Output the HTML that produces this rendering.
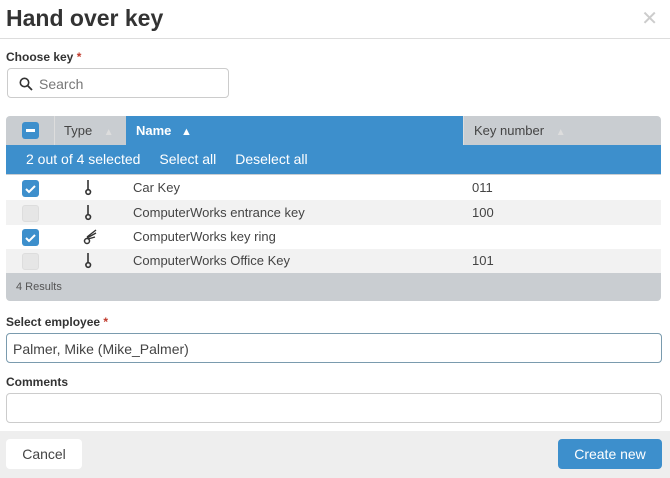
<!DOCTYPE html>
<html><head><meta charset="utf-8"><style>
*{box-sizing:border-box;margin:0;padding:0}
body{width:670px;height:478px;background:#fff;font-family:"Liberation Sans",Arial,sans-serif;color:#333;position:relative;overflow:hidden}
.abs{position:absolute}
.title{left:6px;top:5px;font-size:23px;font-weight:bold;color:#333}
.close{right:12px;top:6px;font-size:20px;color:#ccc}
.sep{left:0;top:38px;width:670px;height:1px;background:#ddd}
.lbl{font-size:12px;font-weight:bold;color:#333;left:6px}
.req{color:#c0392b}
.search{left:7px;top:68px;width:222px;height:30px;border:1px solid #ccc;border-radius:4px}
.search span{position:absolute;left:31px;top:7px;font-size:14px;color:#777}
.tbl{left:6px;top:116px;width:655px;height:185px;border-radius:4px;overflow:hidden;background:#c9cdd1}
.hdr{position:absolute;top:0;height:29px;font-size:13px;line-height:29px}
.bar{position:absolute;top:29px;left:0;width:655px;height:29px;background:#3d8fcc;color:#fff;font-size:14px;line-height:29px}
.row{position:absolute;left:0;width:655px;font-size:13px;color:#444}
.cb{position:absolute;left:16px;width:17px;height:17px;border-radius:3px;background:#e6e6e6;border:1px solid #ddd}
.cb.on{background:#3d8fcc;border:none}
.foot{left:0;top:431px;width:670px;height:47px;background:#eeeeee}
.inp{left:6px;width:656px;height:30px;border:1px solid #ccc;border-radius:4px;background:#fff}
.btn{top:439px;height:30px;border-radius:4px;font-size:14px;line-height:30px;text-align:center}
.key{position:absolute;left:78px}
</style></head><body>
<div class="abs title">Hand over key</div>
<div class="abs close">✕</div>
<div class="abs sep"></div>
<div class="abs lbl" style="top:50px">Choose key <span class="req">*</span></div>
<div class="abs search"><svg style="position:absolute;left:11px;top:8px" width="14" height="14" viewBox="0 0 14 14"><circle cx="5.5" cy="5.5" r="4.2" fill="none" stroke="#333" stroke-width="1.6"/><line x1="8.5" y1="8.5" x2="13" y2="13" stroke="#333" stroke-width="1.8"/></svg><span>Search</span></div>

<div class="abs tbl">
 <div class="hdr" style="left:0;width:49px;border-right:1px solid #ddd"><div style="position:absolute;left:16px;top:6px;width:17px;height:17px;border-radius:3px;background:#3d8fcc"><div style="position:absolute;left:4px;top:7px;width:9px;height:2.5px;background:#fff"></div></div></div>
 <div class="hdr" style="left:58px;color:#444">Type <span style="color:#ddd;margin-left:8px;font-size:10px">▲</span></div>
 <div class="hdr" style="left:120px;width:337px;background:#3d8fcc;color:#fff;font-weight:bold;padding-left:10px">Name <span style="margin-left:6px;font-size:11px">▲</span></div>
 <div class="hdr" style="left:457px;width:198px;border-left:1px solid #ddd;color:#444;padding-left:10px">Key number <span style="color:#ddd;margin-left:8px;font-size:10px">▲</span></div>
 <div class="bar"><span style="margin-left:20px">2 out of 4 selected</span><span style="margin-left:19px">Select all</span><span style="margin-left:19px">Deselect all</span></div>
 <div class="row" style="top:59px;height:25px;background:#fff"><div class="cb on" style="top:5px"><svg width="17" height="17"><path d="M4 9l3 3 6-6" fill="none" stroke="#fff" stroke-width="2"/></svg></div><svg class="key" style="top:4px" width="10" height="17"><path d="M4 1v10" stroke="#333" stroke-width="1.6"/><circle cx="4.2" cy="13" r="2.3" fill="none" stroke="#333" stroke-width="1.6"/></svg><span class="abs" style="left:127px;top:5px">Car Key</span><span class="abs" style="left:466px;top:5px">011</span></div>
 <div class="row" style="top:84px;height:25px;background:#f2f2f2"><div class="cb" style="top:5px"></div><svg class="key" style="top:4px" width="10" height="17"><path d="M4 1v10" stroke="#333" stroke-width="1.6"/><circle cx="4.2" cy="13" r="2.3" fill="none" stroke="#333" stroke-width="1.6"/></svg><span class="abs" style="left:127px;top:5px">ComputerWorks entrance key</span><span class="abs" style="left:466px;top:5px">100</span></div>
 <div class="row" style="top:109px;height:24px;background:#fff"><div class="cb on" style="top:4px"><svg width="17" height="17"><path d="M4 9l3 3 6-6" fill="none" stroke="#fff" stroke-width="2"/></svg></div><svg class="key" style="top:3px;left:75px" width="18" height="18"><path d="M15 2L6 9M15 5L6 10M14 9L7 11" stroke="#333" stroke-width="1.4" fill="none"/><circle cx="6" cy="13" r="2.5" fill="none" stroke="#333" stroke-width="1.5"/></svg><span class="abs" style="left:127px;top:4px">ComputerWorks key ring</span></div>
 <div class="row" style="top:133px;height:24px;background:#f2f2f2"><div class="cb" style="top:4px"></div><svg class="key" style="top:3px" width="10" height="17"><path d="M4 1v10" stroke="#333" stroke-width="1.6"/><circle cx="4.2" cy="13" r="2.3" fill="none" stroke="#333" stroke-width="1.6"/></svg><span class="abs" style="left:127px;top:4px">ComputerWorks Office Key</span><span class="abs" style="left:466px;top:4px">101</span></div>
 <div class="abs" style="left:10px;top:165px;font-size:11px;color:#555">4 Results</div>
</div>

<div class="abs lbl" style="top:315px">Select employee <span class="req">*</span></div>
<div class="abs inp" style="top:333px;border-color:#7a9bae"><span class="abs" style="left:6px;top:7px;font-size:14px;color:#444">Palmer, Mike (Mike_Palmer)</span></div>
<div class="abs lbl" style="top:375px">Comments</div>
<div class="abs inp" style="top:393px"></div>
<div class="abs foot"></div>
<div class="abs btn" style="left:6px;width:76px;background:#fff;color:#444">Cancel</div>
<div class="abs btn" style="left:558px;width:104px;background:#3d8fcc;color:#fff">Create new</div>
</body></html>
